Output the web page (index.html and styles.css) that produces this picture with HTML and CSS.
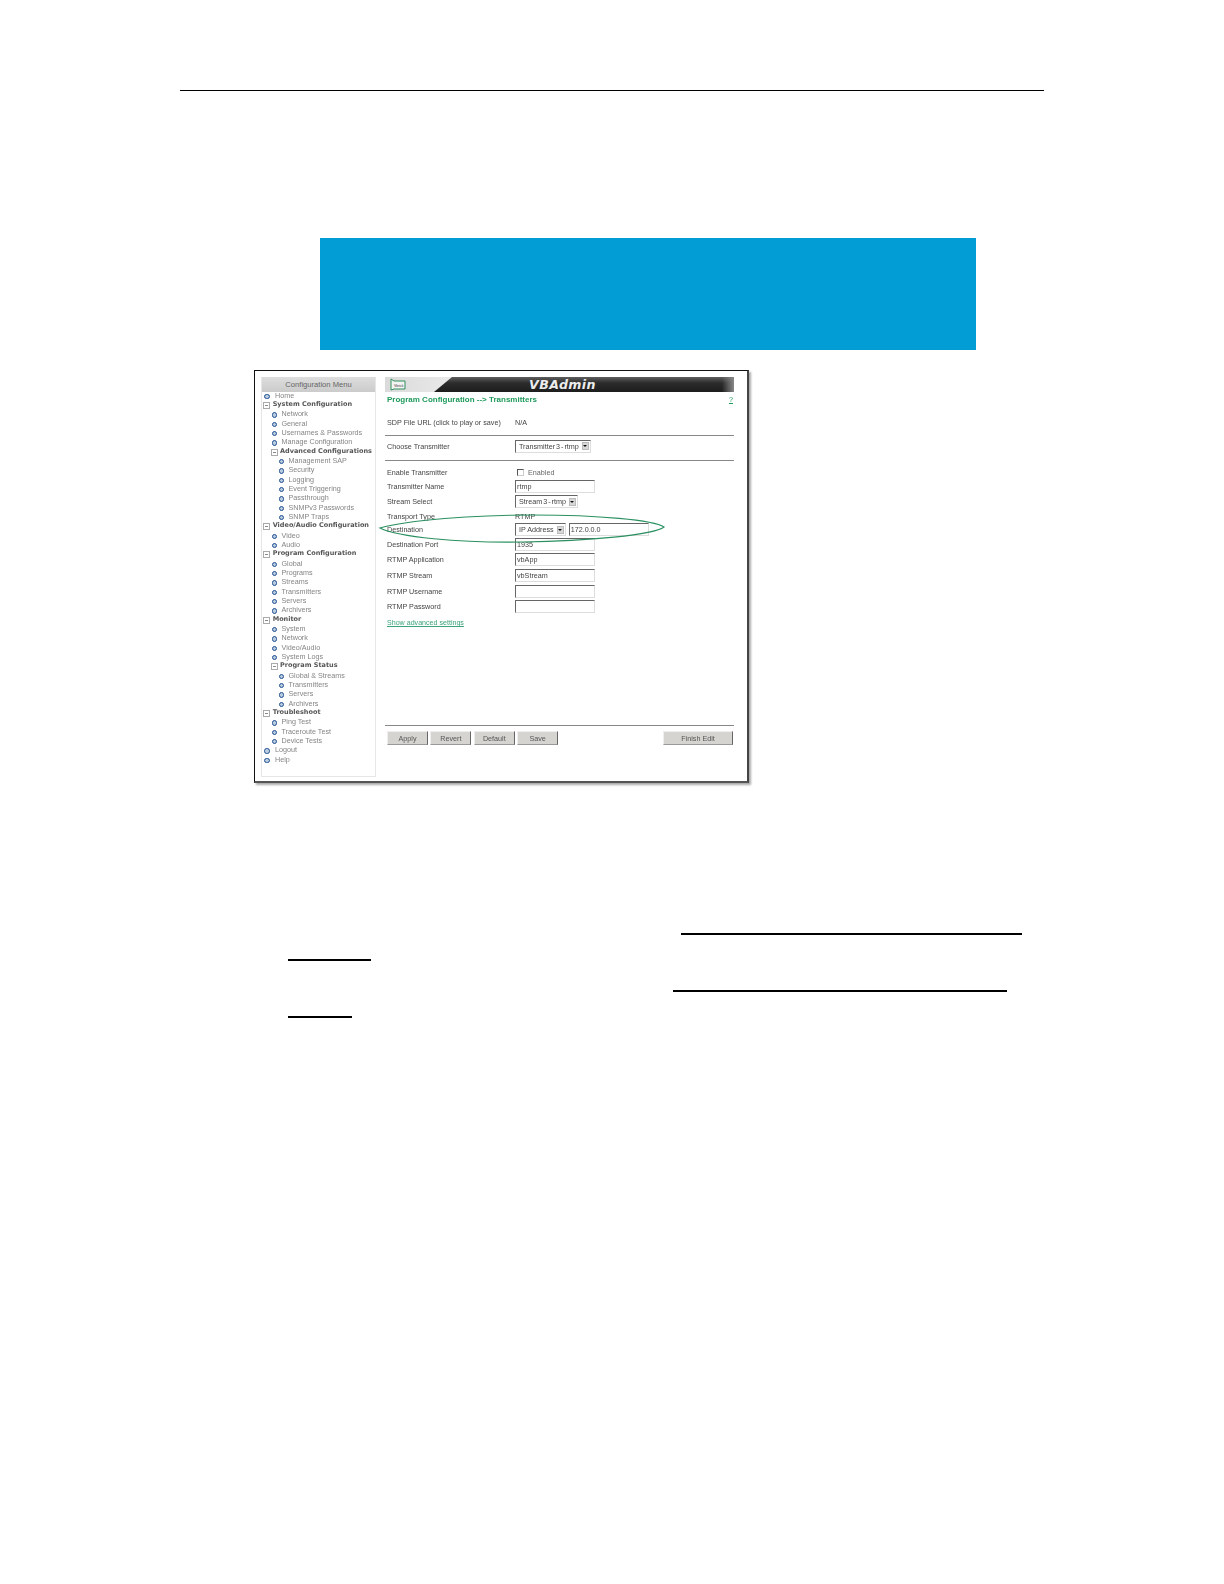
FILE: index.html
```html
<!DOCTYPE html>
<html lang="en">
<head>
<meta charset="utf-8">
<title>VBAdmin - Transmitters</title>
<link rel="stylesheet" href="styles.css">
</head>
<body>
<div class="page">
  <div class="top-rule"></div>
  <div class="blue-band"></div>
  <div class="shot">
    <div class="shot-inner">
      <nav class="side">
        <div class="side-head">Configuration Menu</div>
        <ul class="tree">
          <li class="it l0">Home</li>
          <li class="hd l0">System Configuration</li>
          <li class="it l1">Network</li>
          <li class="it l1">General</li>
          <li class="it l1">Usernames &amp; Passwords</li>
          <li class="it l1">Manage Configuration</li>
          <li class="hd l1">Advanced Configurations</li>
          <li class="it l2">Management SAP</li>
          <li class="it l2">Security</li>
          <li class="it l2">Logging</li>
          <li class="it l2">Event Triggering</li>
          <li class="it l2">Passthrough</li>
          <li class="it l2">SNMPv3 Passwords</li>
          <li class="it l2">SNMP Traps</li>
          <li class="hd l0">Video/Audio Configuration</li>
          <li class="it l1">Video</li>
          <li class="it l1">Audio</li>
          <li class="hd l0">Program Configuration</li>
          <li class="it l1">Global</li>
          <li class="it l1">Programs</li>
          <li class="it l1">Streams</li>
          <li class="it l1">Transmitters</li>
          <li class="it l1">Servers</li>
          <li class="it l1">Archivers</li>
          <li class="hd l0">Monitor</li>
          <li class="it l1">System</li>
          <li class="it l1">Network</li>
          <li class="it l1">Video/Audio</li>
          <li class="it l1">System Logs</li>
          <li class="hd l1">Program Status</li>
          <li class="it l2">Global &amp; Streams</li>
          <li class="it l2">Transmitters</li>
          <li class="it l2">Servers</li>
          <li class="it l2">Archivers</li>
          <li class="hd l0">Troubleshoot</li>
          <li class="it l1">Ping Test</li>
          <li class="it l1">Traceroute Test</li>
          <li class="it l1">Device Tests</li>
          <li class="it l0">Logout</li>
          <li class="it l0">Help</li>
        </ul>
      </nav>
      <main class="main">
        <header class="banner">
          <div class="logo">
            <svg class="logo-mark" viewBox="0 0 16 13" aria-hidden="true">
              <path d="M1 12V1l3 2h11v8H4z" fill="#f4f4f4" stroke="#2f8f5b" stroke-width="1"/>
              <text x="4" y="8.6" class="logo-text">Vbrick</text>
            </svg>
          </div>
          <div class="banner-dark"><span class="banner-title">VBAdmin</span></div>
        </header>
        <div class="crumb"><span>Program Configuration --&gt; Transmitters</span><span class="help">?</span></div>
        <div class="row row-sdp"><span class="lbl">SDP File URL (click to play or save)</span><span>N/A</span></div>
        <hr class="sep sep-a">
        <div class="row row-choose"><span class="lbl">Choose Transmitter</span><span class="sel sel-narrow">Transmitter 3 - rtmp<i class="arrow"></i></span></div>
        <hr class="sep sep-b">
        <div class="form">
          <div class="row h14"><span class="lbl">Enable Transmitter</span><span class="check-wrap"><i class="check"></i>Enabled</span></div>
          <div class="row h14"><span class="lbl">Transmitter Name</span><span class="inp">rtmp</span></div>
          <div class="row h16"><span class="lbl">Stream Select</span><span class="sel sel-narrow">Stream 3 - rtmp<i class="arrow"></i></span></div>
          <div class="row h13"><span class="lbl">Transport Type</span><span>RTMP</span></div>
          <div class="row h14"><span class="lbl">Destination</span><span class="sel">IP Address<i class="arrow"></i></span><span class="inp">172.0.0.0</span></div>
          <div class="row h15"><span class="lbl">Destination Port</span><span class="inp">1935</span></div>
          <div class="row h16"><span class="lbl">RTMP Application</span><span class="inp">vbApp</span></div>
          <div class="row h16"><span class="lbl">RTMP Stream</span><span class="inp">vbStream</span></div>
          <div class="row h16"><span class="lbl">RTMP Username</span><span class="inp"></span></div>
          <div class="row h14"><span class="lbl">RTMP Password</span><span class="inp"></span></div>
        </div>
        <a class="adv">Show advanced settings</a>
        <hr class="sep sep-c">
        <div class="btns">
          <span class="btn">Apply</span>
          <span class="btn">Revert</span>
          <span class="btn">Default</span>
          <span class="btn">Save</span>
          <span class="btn btn-finish">Finish Edit</span>
        </div>
      </main>
    </div>
    <svg class="oval" viewBox="0 0 288 29" aria-hidden="true">
      <path d="M2 14C30 6 95 1 155 1C220 1 276 6 286 13C276 21 210 27 145 28C80 29 20 23 2 14Z" fill="none" stroke="#2a9060" stroke-width="1.2"/>
    </svg>
  </div>
  <div class="links">
    <div class="line-row"><span class="u u1"></span></div>
    <div class="line-row lr-b"><span class="u u2"></span></div>
    <div class="line-row lr-c"><span class="u u3"></span></div>
    <div class="line-row lr-b"><span class="u u4"></span></div>
  </div>
</div>
</body>
</html>
```
FILE: styles.css
```css
* { box-sizing: border-box; }
html, body { margin: 0; padding: 0; background: #fff; }
.page { width: 1224px; height: 1584px; overflow: hidden; padding-top: 90px; font-family: "Liberation Sans", Arial, sans-serif; }

.top-rule { margin-left: 180px; width: 864px; height: 1px; background: #000; }
.blue-band { margin: 147px 0 0 320px; width: 656px; height: 112px; background: #029dd5; }

.shot {
  position: relative;
  margin: 20px 0 0 254px;
  width: 495px;
  height: 413px;
  background: #fff;
  border: 1px solid #111;
  border-right: 2px solid #444;
  border-bottom: 2px solid #555;
  box-shadow: 2px 2px 2px #aaa;
  padding: 6px 0 0 6px;
}
.shot-inner { display: flex; gap: 9px; height: 100%; filter: blur(0.45px); }

.side { width: 115px; height: 400px; border: 1px solid #e6e6e6; border-top: 0; flex: none; }
.side-head {
  height: 15px;
  line-height: 16px;
  text-align: center;
  font-size: 7.6px;
  color: #666;
  background: linear-gradient(#dedede, #cbcbcb);
}
.tree { list-style: none; margin: -1.3px 0 0; padding: 0; font-size: 7.2px; line-height: 9.34px; }
.tree li { position: relative; white-space: nowrap; height: 9.34px; }
.it { color: #858585; }
.hd { color: #555; font-family: "DejaVu Sans", sans-serif; font-weight: 700; font-size: 6.5px; }
.it.l0 { padding-left: 13px; }
.it.l1 { padding-left: 19.5px; }
.it.l2 { padding-left: 26.5px; }
.hd.l0 { padding-left: 10.7px; }
.hd.l1 { padding-left: 18px; }
.it::before {
  content: "";
  position: absolute;
  top: 3px;
  width: 3.4px;
  height: 3.4px;
  border-radius: 50%;
  border: 1px solid #1f4f8f;
  background: #b9cbe0;
}
.it.l0::before { left: 2.2px; }
.it.l1::before { left: 9.5px; }
.it.l2::before { left: 17px; }
.hd::before {
  content: "";
  position: absolute;
  top: 2px;
  width: 5px;
  height: 5px;
  border: 1px solid #aaa;
  background: linear-gradient(#888, #888) center / 3px 1px no-repeat;
}
.hd.l0::before { left: 1px; }
.hd.l1::before { left: 8.5px; }

.main { width: 349px; flex: none; font-size: 7.2px; color: #444; }
.banner { display: flex; height: 15px; background: linear-gradient(90deg, #dadada, #f4f4f4 32%, #e2e2e2 62%, #8e8e8e); }
.logo { width: 49px; padding: 1px 0 0 5px; flex: none; }
.logo-mark { display: block; width: 16px; height: 13px; }
.logo-text { font-size: 3.4px; fill: #333; font-family: "Liberation Sans", sans-serif; }
.banner-dark {
  flex: 1;
  text-align: center;
  padding-right: 43px;
  background: linear-gradient(90deg, #0000 96%, #888 100%), linear-gradient(#5f5f5f, #2c2c2c 40%, #1d1d1d);
  clip-path: polygon(18px 0, 100% 0, 100% 100%, 0 100%);
}
.banner-title { font: italic 700 12.6px/15px "DejaVu Sans", sans-serif; color: #ececec; letter-spacing: .4px; }

.crumb { display: flex; justify-content: space-between; padding: 0 1px 1px 2px; height: 16px; align-items: center; font-weight: 700; color: #1f9a5c; font-size: 8px; }
.help { font-weight: 400; text-decoration: underline; font-size: 7.2px; }

.row { display: flex; align-items: center; padding-left: 2px; gap: 3px; height: 15px; }
.lbl { width: 125px; flex: none; }
.row-sdp { margin-top: 6.7px; }
.sep { border: 0; height: 1px; background: #888; margin: 0; }
.sep-a { margin-top: 5.3px; }
.row-choose { margin-top: 3.4px; height: 14px; }
.sep-b { margin-top: 7px; }
.form { margin-top: 4.3px; }
.h13 { height: 13px; }
.h14 { height: 14px; }
.h15 { height: 15px; }
.h16 { height: 16px; }

.sel {
  display: inline-flex;
  align-items: center;
  height: 13px;
  padding: 0 1px 0 3px;
  background: #fff;
  border: 1px solid #ddd;
  border-top-color: #666;
  border-left-color: #666;
  gap: 3px;
}
.sel-narrow { word-spacing: -1px; }
.arrow {
  display: flex;
  align-items: center;
  justify-content: center;
  width: 7px;
  height: 8px;
  background: #d8d8d8;
  border: 1px solid #bbb;
}
.arrow::after {
  content: "";
  border-left: 2px solid transparent;
  border-right: 2px solid transparent;
  border-top: 2px solid #111;
}
.inp {
  display: block;
  width: 80px;
  height: 13px;
  line-height: 12px;
  padding-left: 1px;
  background: #fff;
  border: 1px solid #ddd;
  border-top-color: #666;
  border-left-color: #666;
}
.check-wrap { display: inline-flex; align-items: center; gap: 4px; padding-left: 2px; color: #666; }
.check { display: block; width: 7px; height: 7px; border: 1px solid #ccc; border-top-color: #555; border-left-color: #555; }

.adv { display: block; margin: 3.8px 0 0 2px; height: 12px; line-height: 12px; color: #3aa37a; text-decoration: underline; font-size: 7.1px; }
.sep-c { margin-top: 96px; }
.btns { display: flex; gap: 2.4px; margin-top: 5px; padding: 0 1px 0 2px; }
.btn {
  width: 41px;
  height: 14px;
  line-height: 13px;
  text-align: center;
  background: #d6d4d0;
  border-right: 1px solid #666;
  border-bottom: 1px solid #999;
  border-left: 1px solid #eee;
  border-top: 1px solid #eee;
  color: #555;
}
.btn-finish { width: 70px; margin-left: auto; }

.oval { position: absolute; left: 123px; top: 143px; width: 288px; height: 29px; }

.links { margin-top: 150px; }
.line-row { height: 2px; display: flex; }
.lr-b { margin-top: 24px; }
.lr-c { margin-top: 29px; }
.u { display: block; height: 2px; background: #000; }
.u1 { margin-left: 681px; width: 341px; }
.u2 { margin-left: 288px; width: 83px; }
.u3 { margin-left: 673px; width: 334px; }
.u4 { margin-left: 288px; width: 64px; }
```
